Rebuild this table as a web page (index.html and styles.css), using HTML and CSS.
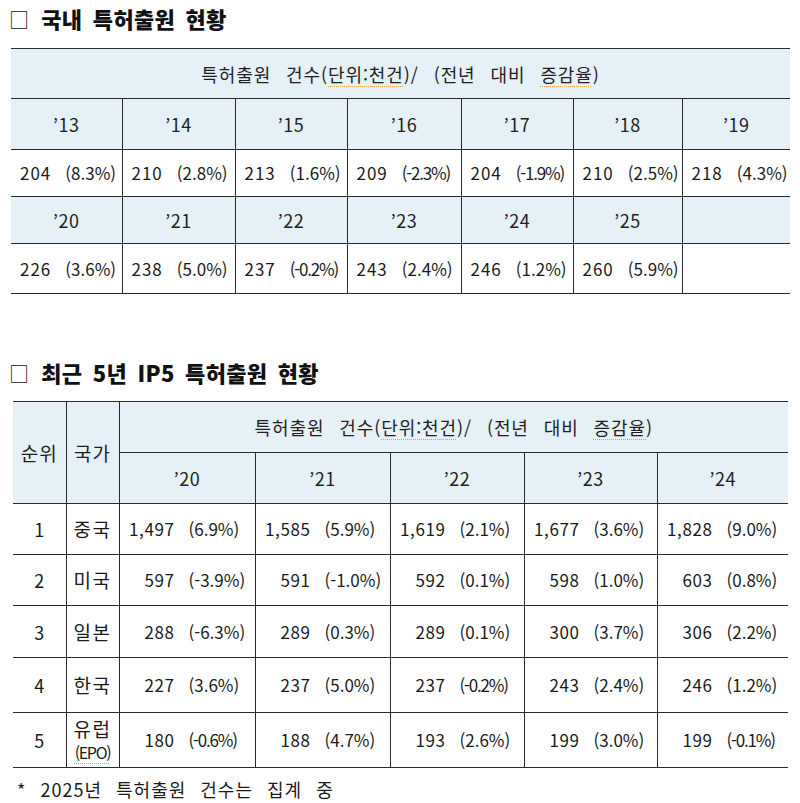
FILE: index.html
```html
<!DOCTYPE html>
<html lang="ko">
<head>
<meta charset="utf-8">
<title>특허출원 현황</title>
<link rel="stylesheet" href="styles.css">
</head>
<body>
<h2 class="title"><span class="box">□</span>국내 특허출원 현황</h2>
<table class="t1">
  <colgroup>
    <col class="c1a"><col class="c1b"><col class="c1c"><col class="c1d"><col class="c1e"><col class="c1f"><col class="c1g">
  </colgroup>
  <tr class="r-head">
    <td class="hd hdt" colspan="7">특허출원 건수(<span class="sp">단위:천건</span>)/ (전년 대비 <span class="sp">증감율</span>)</td>
  </tr>
  <tr class="r-year1">
    <td class="hd yr">’13</td><td class="hd yr">’14</td><td class="hd yr">’15</td><td class="hd yr">’16</td><td class="hd yr">’17</td><td class="hd yr">’18</td><td class="hd yr">’19</td>
  </tr>
  <tr class="r-data1">
    <td class="d"><span class="n">204</span><span class="p">(8.3%)</span></td>
    <td class="d"><span class="n">210</span><span class="p">(2.8%)</span></td>
    <td class="d"><span class="n">213</span><span class="p">(1.6%)</span></td>
    <td class="d"><span class="n">209</span><span class="p tight">(-2.3%)</span></td>
    <td class="d"><span class="n">204</span><span class="p tight">(-1.9%)</span></td>
    <td class="d"><span class="n">210</span><span class="p">(2.5%)</span></td>
    <td class="d"><span class="n">218</span><span class="p">(4.3%)</span></td>
  </tr>
  <tr class="r-year2">
    <td class="hd yr">’20</td><td class="hd yr">’21</td><td class="hd yr">’22</td><td class="hd yr">’23</td><td class="hd yr">’24</td><td class="hd yr">’25</td><td class="hd yr"></td>
  </tr>
  <tr class="r-data2">
    <td class="d"><span class="n">226</span><span class="p">(3.6%)</span></td>
    <td class="d"><span class="n">238</span><span class="p">(5.0%)</span></td>
    <td class="d"><span class="n">237</span><span class="p tight">(-0.2%)</span></td>
    <td class="d"><span class="n">243</span><span class="p">(2.4%)</span></td>
    <td class="d"><span class="n">246</span><span class="p">(1.2%)</span></td>
    <td class="d"><span class="n">260</span><span class="p">(5.9%)</span></td>
    <td class="d"></td>
  </tr>
</table>

<h2 class="title title2"><span class="box">□</span>최근 5년 IP5 특허출원 현황</h2>
<table class="t2">
  <colgroup>
    <col class="c2a"><col class="c2b"><col class="c2c"><col class="c2d"><col class="c2e"><col class="c2f"><col class="c2g">
  </colgroup>
  <tr class="r2-head">
    <td class="hd lab" rowspan="2">순위</td>
    <td class="hd lab" rowspan="2">국가</td>
    <td class="hd hdt" colspan="5">특허출원 건수(<span class="sp">단위:천건</span>)/ (전년 대비 <span class="sp">증감율</span>)</td>
  </tr>
  <tr class="r2-year">
    <td class="hd yr">’20</td><td class="hd yr">’21</td><td class="hd yr">’22</td><td class="hd yr">’23</td><td class="hd yr">’24</td>
  </tr>
  <tr class="r2-a">
    <td class="rk">1</td><td class="ct">중국</td>
    <td class="v"><span class="n">1,497</span><span class="p">(6.9%)</span></td>
    <td class="v"><span class="n">1,585</span><span class="p">(5.9%)</span></td>
    <td class="v"><span class="n">1,619</span><span class="p">(2.1%)</span></td>
    <td class="v"><span class="n">1,677</span><span class="p">(3.6%)</span></td>
    <td class="v"><span class="n">1,828</span><span class="p">(9.0%)</span></td>
  </tr>
  <tr class="r2-a">
    <td class="rk">2</td><td class="ct">미국</td>
    <td class="v"><span class="n">597</span><span class="p">(-3.9%)</span></td>
    <td class="v"><span class="n">591</span><span class="p">(-1.0%)</span></td>
    <td class="v"><span class="n">592</span><span class="p">(0.1%)</span></td>
    <td class="v"><span class="n">598</span><span class="p">(1.0%)</span></td>
    <td class="v"><span class="n">603</span><span class="p">(0.8%)</span></td>
  </tr>
  <tr class="r2-b">
    <td class="rk">3</td><td class="ct">일본</td>
    <td class="v"><span class="n">288</span><span class="p">(-6.3%)</span></td>
    <td class="v"><span class="n">289</span><span class="p">(0.3%)</span></td>
    <td class="v"><span class="n">289</span><span class="p">(0.1%)</span></td>
    <td class="v"><span class="n">300</span><span class="p">(3.7%)</span></td>
    <td class="v"><span class="n">306</span><span class="p">(2.2%)</span></td>
  </tr>
  <tr class="r2-c">
    <td class="rk">4</td><td class="ct">한국</td>
    <td class="v"><span class="n">227</span><span class="p">(3.6%)</span></td>
    <td class="v"><span class="n">237</span><span class="p">(5.0%)</span></td>
    <td class="v"><span class="n">237</span><span class="p tight">(-0.2%)</span></td>
    <td class="v"><span class="n">243</span><span class="p">(2.4%)</span></td>
    <td class="v"><span class="n">246</span><span class="p">(1.2%)</span></td>
  </tr>
  <tr class="r2-c">
    <td class="rk">5</td><td class="ct eu">유럽<br><span class="epo sp">(EPO)</span></td>
    <td class="v"><span class="n">180</span><span class="p tight">(-0.6%)</span></td>
    <td class="v"><span class="n">188</span><span class="p">(4.7%)</span></td>
    <td class="v"><span class="n">193</span><span class="p">(2.6%)</span></td>
    <td class="v"><span class="n">199</span><span class="p">(3.0%)</span></td>
    <td class="v"><span class="n">199</span><span class="p tight">(-0.1%)</span></td>
  </tr>
</table>
<p class="note">* 2025년 특허출원 건수는 집계 중</p>
</body>
</html>
```

FILE: styles.css
```css
html, body {
  margin: 0;
  padding: 0;
  background: #ffffff;
}
body {
  font-family: "Noto Sans CJK KR", "Noto Sans", sans-serif;
  color: #1a1a1a;
  width: 800px;
}
.title {
  margin: 0;
  height: 36px;
  line-height: 36px;
  padding-left: 9px;
  font-size: 22px;
  font-weight: 900;
  color: #111;
  word-spacing: 4px;
  letter-spacing: 0.3px;
}
.box {
  font-weight: 400;
  font-size: 20px;
  margin-right: 12px;
}
.title2 {
  margin-top: 60px;
}
table {
  border-collapse: collapse;
  table-layout: fixed;
}
td {
  padding: 0;
  border: 1px solid #2a2a2a;
  line-height: 20px;
}
.t1 {
  margin: 12px 0 0 11px;
  width: 779px;
  border-left: 0;
  border-right: 0;
}
.t1 tr td:first-child { border-left: 0; }
.t1 tr td:last-child { border-right: 0; }
.c1a { width: 111px; }
.c1b { width: 113px; }
.c1c { width: 112px; }
.c1d { width: 114px; }
.c1e { width: 112px; }
.c1f { width: 109px; }
.c1g { width: 108px; }
.r-head td { height: 49px; }
.r-year1 td { height: 50px; }
.r-data1 td { height: 46px; }
.r-year2 td { height: 46px; }
.r-data2 td { height: 49px; }

.hd {
  background: #e5f1f6;
  text-align: center;
  font-size: 17px;
  color: #1f1f1f;
}
.hdt {
  font-size: 18px;
  letter-spacing: 0.9px;
  word-spacing: 9px;
}
.yr {
  font-size: 18px;
  letter-spacing: 0.5px;
}
.sp {
  text-decoration: underline dotted #d9a24a;
  text-underline-offset: 4px;
  text-decoration-thickness: 1px;
}
.d {
  font-size: 17px;
  padding-left: 9px;
  white-space: nowrap;
}
.d .n {
  letter-spacing: 1px;
}
.d .p {
  margin-left: 14px;
}
.tight {
  letter-spacing: -1.2px;
}

.t2 {
  margin: 11px 0 0 13px;
  width: 775px;
}
.t2 tr td:first-child { border-left: 0; }
.t2 tr td:last-child { border-right: 0; }
.c2a { width: 53px; }
.c2b { width: 53px; }
.c2c { width: 136px; }
.c2d { width: 135px; }
.c2e { width: 134px; }
.c2f { width: 133px; }
.c2g { width: 131px; }
.r2-head td { height: 50px; }
.r2-year td { height: 50px; }
.r2-a td { height: 50px; }
.r2-b td { height: 51px; }
.r2-c td { height: 54px; }
.lab {
  font-size: 19px;
  letter-spacing: 1px;
}
.rk {
  text-align: center;
  font-size: 18px;
}
.ct {
  text-align: center;
  font-size: 19px;
  letter-spacing: 1.5px;
}
.eu {
  line-height: 22px;
}
.epo {
  font-size: 16px;
  letter-spacing: -1.3px;
}
.v {
  font-size: 17px;
  white-space: nowrap;
}
.v .n {
  display: inline-block;
  width: 55px;
  text-align: right;
  letter-spacing: 0.6px;
}
.v .p {
  margin-left: 14px;
}
.note {
  margin: 9px 0 0 17px;
  font-size: 18px;
  line-height: 24px;
  letter-spacing: 1px;
  word-spacing: 8px;
}
```
